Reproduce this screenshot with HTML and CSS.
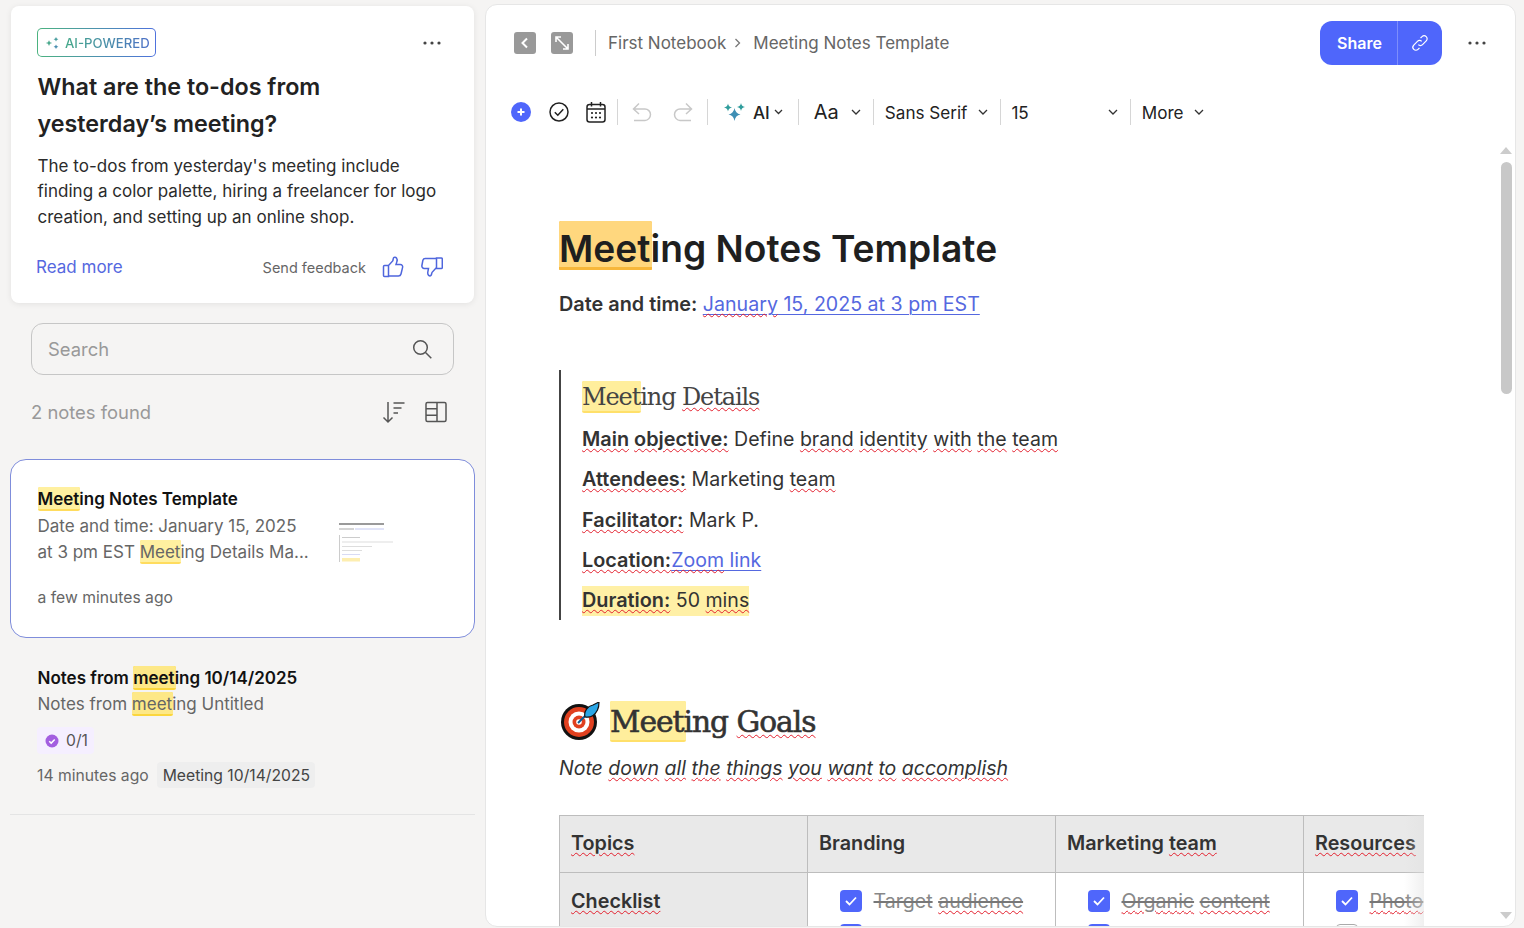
FILE: index.html
```html
<!DOCTYPE html>
<html lang="en">
<head>
<meta charset="utf-8">
<title>Meeting Notes Template</title>
<link rel="stylesheet" href="styles.css">
</head>
<body>
<div class="app">
  <aside class="side">
    <section class="ai-card">
      <div class="ai-top">
        <div class="badge">
          <svg class="badge-icon" width="15" height="14" viewBox="0 0 15 14"><path d="M4 4.200 5 6.200 7.200 7 5 7.800 4 10 3 7.800.8 7 3 6.200Z" fill="#4aa98d"/><path d="M11 1 11.800 2.600 13.400 3.300 11.800 4 11 5.600 10.200 4 8.600 3.300 10.200 2.600Z" fill="#4a9fa0"/><path d="M11 8.400 11.800 10 13.400 10.700 11.800 11.400 11 13 10.200 11.400 8.600 10.700 10.200 10Z" fill="#4a8fb0"/></svg>
          <span class="badge-text">AI-POWERED</span>
        </div>
        <svg class="dots" width="18" height="4" viewBox="0 0 18 4"><circle cx="2" cy="2" r="1.600"/><circle cx="9" cy="2" r="1.600"/><circle cx="16" cy="2" r="1.600"/></svg>
      </div>
      <h2 class="ai-q">What are the to-dos from yesterday’s meeting?</h2>
      <p class="ai-a">The to-dos from yesterday's meeting include finding a color palette, hiring a freelancer for logo creation, and setting up an online shop.</p>
      <div class="ai-foot">
        <a class="read-more">Read more</a>
        <span class="feedback">Send feedback</span>
        <svg class="thumb" width="22" height="22" viewBox="0 0 22 22"><path d="M6.500 9.500v11M1.500 10.500c0-.6.4-1 1-1h4v11h-4c-.6 0-1-.4-1-1ZM6.500 9.500l4.200-4.600c.4-1 .5-2.300 1-3.200.5-.8 2-.7 2.800.3.900 1.100.7 2.700.3 3.900l-.8 2.600h4.300c1.600 0 2.700 1.400 2.300 2.900l-1.600 6.600c-.3 1.200-1.400 2-2.600 2H6.500"/></svg>
        <svg class="thumb" width="22" height="22" viewBox="0 0 22 22"><path d="M15.500 2.500H4.200c-1.100 0-2 .7-2.300 1.700L.9 9.500c-.3 1.500.8 2.900 2.300 2.900h4.300l-.6 3.200c-.3 1.300-.2 2.800.8 3.800.8.800 2 .8 2.500-.2.400-.9.500-2 .9-2.900l4.400-4.800M15.500 2h4.800c.6 0 1 .4 1 1v8.500c0 .6-.4 1-1 1h-4.800Z"/></svg>
      </div>
    </section>

    <div class="search">
      <span class="search-ph">Search</span>
      <svg class="ic-gray" width="22" height="22" viewBox="0 0 22 22"><circle cx="9.500" cy="9.500" r="6.800"/><path d="m14.500 14.500 5.800 5.800"/></svg>
    </div>

    <div class="found">
      <span class="found-text">2 notes found</span>
      <svg class="ic-gray" width="24" height="24" viewBox="0 0 24 24"><path d="M6 2v20M1.500 17.500 6 22l4.500-4.500M11.500 3h11M11.500 8h8M11.500 13h4.500"/></svg>
      <svg class="ic-gray" width="24" height="24" viewBox="0 0 24 24"><rect x="2" y="2.500" width="20" height="19" rx="1.500"/><path d="M13 2.500v19M2 8.800h11M2 15.200h11"/></svg>
    </div>

    <article class="note note-active">
      <div class="note-main">
        <h3 class="note-title"><span class="hl">Meet</span>ing Notes Template</h3>
        <p class="note-prev">Date and time: January 15, 2025<br>at 3 pm EST <span class="hl">Meet</span>ing Details Ma...</p>
      </div>
      <svg class="note-thumb" width="54" height="46" viewBox="0 0 54 46">
        <rect x="0" y="2" width="45" height="2" fill="#9a9a9a"/>
        <rect x="0" y="7.500" width="15" height="1" fill="#aaa"/><rect x="16" y="7.500" width="29" height="1" fill="#c4c9f2"/>
        <rect x="0" y="14" width="1" height="27" fill="#ccc"/>
        <rect x="3" y="16" width="18" height="1" fill="#ccc"/>
        <rect x="3" y="20.500" width="52" height="1" fill="#ddd"/>
        <rect x="3" y="25" width="30" height="1" fill="#ddd"/>
        <rect x="3" y="29" width="20" height="1" fill="#ddd"/>
        <rect x="3" y="33" width="18" height="1" fill="#d8dbf4"/>
        <rect x="3" y="37" width="18" height="3.500" fill="#fdeeb0"/>
      </svg>
      <div class="note-time">a few minutes ago</div>
    </article>

    <article class="note note-plain">
      <h3 class="note-title note-title-2">Notes from <span class="hl hl-strong">meet</span>ing 10/14/2025</h3>
      <p class="note-prev-2">Notes from <span class="hl hl-strong">meet</span>ing Untitled</p>
      <div class="task-chip">
        <svg width="14" height="14" viewBox="0 0 14 14"><circle cx="7" cy="7" r="6.500" fill="#a35ee0"/><path d="m4.200 7.200 2 1.900 3.500-3.600" fill="none" stroke="#fff" stroke-width="1.500"/></svg>
        <span>0/1</span>
      </div>
      <div class="note-meta"><span class="note-time-2">14 minutes ago</span><span class="tag">Meeting 10/14/2025</span></div>
    </article>
  </aside>

  <main class="panel">
    <header class="topbar">
      <span class="sq-btn"><svg width="22" height="22" viewBox="0 0 22 22"><path d="m13 6.500-4.500 4.500 4.500 4.500" fill="none" stroke="#fff" stroke-width="2"/></svg></span>
      <span class="sq-btn"><svg width="22" height="22" viewBox="0 0 22 22"><path d="M5 5l12 12M5 10V5h5M17 12v5h-5" fill="none" stroke="#fff" stroke-width="1.600"/></svg></span>
      <span class="crumb-div"></span>
      <span class="crumb">First Notebook</span>
      <svg class="crumb-chev" width="8" height="12" viewBox="0 0 8 12"><path d="m1.500 2 4 4-4 4" fill="none" stroke="#777" stroke-width="1.300"/></svg>
      <span class="crumb">Meeting Notes Template</span>
      <span class="grow"></span>
      <div class="share">
        <span class="share-label">Share</span>
        <span class="share-link"><svg width="20" height="20" viewBox="0 0 18 18"><path d="M7.500 10.500c1.200 1.300 2.800 1 3.800 0l3.300-3.400c1.100-1.100 1.100-2.700 0-3.800s-2.700-1.100-3.800 0L9.500 4.500M10.500 7.500c-1.200-1.300-2.800-1-3.800 0l-3.300 3.400c-1.100 1.100-1.100 2.700 0 3.800s2.700 1.100 3.800 0l1.300-1.200" fill="none" stroke="#fff" stroke-width="1.100"/></svg></span>
      </div>
      <svg class="dots dots-main" width="18" height="4" viewBox="0 0 18 4"><circle cx="2" cy="2" r="1.600"/><circle cx="9" cy="2" r="1.600"/><circle cx="16" cy="2" r="1.600"/></svg>
    </header>

    <div class="toolbar">
      <span class="t-plus"><svg width="20" height="20" viewBox="0 0 20 20"><circle cx="10" cy="10" r="10" fill="#4f66fb"/><path d="M10 6.500v7M6.500 10h7" stroke="#fff" stroke-width="2"/></svg></span>
      <svg class="t-ic t-check" width="20" height="20" viewBox="0 0 20 20"><circle cx="10" cy="10" r="9"/><path d="m5.800 10.200 3 3 5.500-6"/></svg>
      <svg class="t-ic t-cal" width="20" height="22" viewBox="0 0 20 22"><rect x="1" y="3.500" width="18" height="17.500" rx="2.500"/><path d="M1 8h18M5.500 1v4.500M14.500 1v4.500"/><g class="cal-dots"><circle cx="6" cy="12" r="1.100"/><circle cx="10" cy="12" r="1.100"/><circle cx="14" cy="12" r="1.100"/><circle cx="6" cy="16.500" r="1.100"/><circle cx="10" cy="16.500" r="1.100"/><circle cx="14" cy="16.500" r="1.100"/></g></svg>
      <span class="t-div t-d1"></span>
      <svg class="t-ic-light t-undo" width="20" height="20" viewBox="0 0 20 20"><path d="M7 1.500 1.500 7 7 12M1.500 7H13c3 0 5.500 2.500 5.500 5.500S16 18.500 13 18.500H2"/></svg>
      <svg class="t-ic-light t-redo" width="20" height="20" viewBox="0 0 20 20"><path d="M13 1.500 18.500 7 13 12M18.500 7H7c-3 0-5.500 2.500-5.500 5.500S4 18.500 7 18.500h11"/></svg>
      <span class="t-div t-d2"></span>
      <svg class="t-spark" width="21" height="18" viewBox="0 0 21 18"><path d="M10.500 5Q11.300 10.500 16.500 11.400 11.300 12.300 10.500 18 9.700 12.300 4.500 11.400 9.700 10.500 10.500 5Z" fill="#3f8fb5"/><path d="M4 .5Q4.500 4 8 4.600 4.500 5.200 4 8.500 3.500 5.200 0 4.600 3.500 4 4 .5Z" fill="#2f9d9c"/><path d="M17 0Q17.500 3.500 21 4.100 17.500 4.700 17 8 16.500 4.700 13 4.100 16.500 3.500 17 0Z" fill="#2f9d9c"/></svg>
      <span class="t-label t-ai">AI</span>
      <svg class="chev chev-ai" width="9" height="6" viewBox="0 0 9 6"><path d="m1 1 3.500 3.500L8 1"/></svg>
      <span class="t-div t-d3"></span>
      <span class="t-label t-aa">Aa</span>
      <svg class="chev chev-aa" width="10" height="6" viewBox="0 0 10 6"><path d="m1 1 4 4 4-4"/></svg>
      <span class="t-div t-d4"></span>
      <span class="t-label t-font">Sans Serif</span>
      <svg class="chev chev-font" width="10" height="6" viewBox="0 0 10 6"><path d="m1 1 4 4 4-4"/></svg>
      <span class="t-div t-d5"></span>
      <span class="t-label t-size">15</span>
      <svg class="chev chev-size" width="10" height="6" viewBox="0 0 10 6"><path d="m1 1 4 4 4-4"/></svg>
      <span class="t-div t-d6"></span>
      <span class="t-label t-more">More</span>
      <svg class="chev chev-more" width="10" height="6" viewBox="0 0 10 6"><path d="m1 1 4 4 4-4"/></svg>
    </div>

    <div class="editor-wrap">
      <article class="doc">
        <h1 class="doc-title"><span class="hl hl-orange">Meet</span>ing Notes Template</h1>
        <p class="doc-date"><b>Date and time:</b> <a class="link"><span class="sp">January</span> 15, 2025 at 3 pm EST</a></p>

        <blockquote class="details">
          <h2 class="slab slab-sm"><span class="hl hl-pale">Meet</span>ing <span class="sp">Details</span></h2>
          <p class="row row-first"><b><span class="sp">Main</span> <span class="sp">objective:</span></b> Define <span class="sp">brand</span> <span class="sp">identity</span> <span class="sp">with</span> <span class="sp">the</span> <span class="sp">team</span></p>
          <p class="row"><b><span class="sp">Attendees:</span></b> Marketing <span class="sp">team</span></p>
          <p class="row"><b><span class="sp">Facilitator:</span></b> Mark P.</p>
          <p class="row"><b><span class="sp">Location:</span></b><a class="link"><span class="sp">Zoom</span> link</a></p>
          <p class="row"><span class="hl-line"><b><span class="sp">Duration:</span></b> 50 <span class="sp">mins</span></span></p>
        </blockquote>

        <h2 class="goals">
          <svg class="target" width="40" height="38" viewBox="0 0 40 38"><circle cx="19" cy="20" r="18" fill="#111"/><circle cx="19" cy="20" r="15" fill="#e0401f"/><circle cx="19" cy="20" r="10.500" fill="#fff"/><circle cx="19" cy="20" r="6.500" fill="#e0401f"/><circle cx="19" cy="20" r="2.800" fill="#fff"/><path d="M18 21 28 11" stroke="#0c5c96" stroke-width="2"/><path d="M25 15c-1.500-6 3-11 8-12l6-3c0 4-.5 6-1.500 8-2.500 5-7 8-12.500 7Z" fill="#2aa6e6" stroke="#111" stroke-width="1.200"/></svg>
          <span class="slab"><span class="hl hl-pale hl-tall">Meet</span>ing <span class="sp">Goals</span></span>
        </h2>
        <p class="doc-note"><em>Note <span class="sp">down</span> <span class="sp">all</span> <span class="sp">the</span> <span class="sp">things</span> <span class="sp">you</span> <span class="sp">want</span> <span class="sp">to</span> <span class="sp">accomplish</span></em></p>

        <div class="table-clip">
          <table class="goal-table">
            <tr>
              <th><span class="sp">Topics</span></th>
              <th>Branding</th>
              <th>Marketing <span class="sp">team</span></th>
              <th><span class="sp">Resources</span></th>
            </tr>
            <tr>
              <th class="row-head"><span class="sp">Checklist</span></th>
              <td><div class="todo"><span class="cb"><svg width="14" height="12" viewBox="0 0 14 12"><path d="m2 6 3.500 3.500L12 2.500" fill="none" stroke="#fff" stroke-width="1.800"/></svg></span><span><s>Target</s> <span class="sp"><s>audience</s></span></span></div><div class="todo"><span class="cb"></span></div></td>
              <td><div class="todo"><span class="cb"><svg width="14" height="12" viewBox="0 0 14 12"><path d="m2 6 3.500 3.500L12 2.500" fill="none" stroke="#fff" stroke-width="1.800"/></svg></span><span><span class="sp"><s>Organic</s></span> <span class="sp"><s>content</s></span></span></div><div class="todo"><span class="cb"></span></div></td>
              <td><div class="todo"><span class="cb"><svg width="14" height="12" viewBox="0 0 14 12"><path d="m2 6 3.500 3.500L12 2.500" fill="none" stroke="#fff" stroke-width="1.800"/></svg></span><span><span class="sp"><s>Photo</s></span></span></div><div class="todo"><span class="cb cb-empty"></span></div></td>
            </tr>
          </table>
          <div class="table-fade"></div>
        </div>
      </article>
      <div class="scrollbar">
        <span class="sb-up"></span>
        <span class="sb-thumb"></span>
        <span class="grow"></span>
        <span class="sb-down"></span>
      </div>
    </div>
  </main>
</div>
</body>
</html>
```
FILE: styles.css
```css
* { box-sizing: border-box; }
html, body { margin: 0; height: 100%; overflow: hidden; }
body { background: #f5f4f3; font-family: Inter, "Liberation Sans", sans-serif; color: #222; }
h1, h2, h3, p, blockquote { margin: 0; font-weight: inherit; font-size: inherit; }
.app { display: flex; height: 928px; overflow: hidden; }
.grow { flex: 1; }

/* Sidebar */
.side { width: 485px; flex: none; padding: 6px 10px 0; }
.ai-card { margin-left: 1px; width: 463px; height: 297px; background: #fff; border-radius: 8px; box-shadow: 0 1px 6px rgba(0,0,0,.08); padding: 22px 26px 0; }
.ai-top { display: flex; align-items: center; justify-content: space-between; padding-right: 7px; }
.badge { width: 119px; height: 29px; display: flex; align-items: center; gap: 5px; padding-left: 7px; border-radius: 5px; border: 1.500px solid transparent; background: linear-gradient(#fff,#fff) padding-box, linear-gradient(90deg,#4bb37f,#4f72dd) border-box; }
.badge-text { font-size: 13.200px; font-weight: 500; white-space: nowrap; background: linear-gradient(90deg,#45a98a,#4f72c8); -webkit-background-clip: text; background-clip: text; color: transparent; }
.dots { fill: #444; }
.ai-q { margin: 11px 0 0 .5px; font-size: 23.300px; font-weight: 600; line-height: 37px; color: #222; }
.ai-a { margin: 11.700px 0 0 .5px; font-size: 17px; letter-spacing: .02px; line-height: 25.500px; color: #2b2b2b; }
.ai-foot { margin-top: 26px; margin-left: -1px; display: flex; align-items: center; }
.read-more { font-size: 17px; color: #5568e0; }
.feedback { margin-left: auto; font-size: 14.500px; color: #666; margin-right: 16px; }
.thumb { fill: none; stroke: #4f66dd; stroke-width: 1.500; }
.thumb + .thumb { margin-left: 17px; margin-right: 5px; }

.search { margin: 20px 10px 0 21px; width: 423px; height: 52px; border: 1px solid #c6c6c6; border-radius: 12px; display: flex; align-items: center; justify-content: space-between; padding: 0 20px 0 16px; }
.search-ph { font-size: 18.400px; color: #999; }
.ic-gray { fill: none; stroke: #555; stroke-width: 1.500; }
.found { margin: 25px 0 0 21px; width: 417px; display: flex; align-items: center; gap: 18px; height: 24px; }
.found-text { flex: 1; font-size: 18.400px; color: #999; }

.note { display: grid; }
.note-active { margin-top: 35px; width: 465px; height: 179px; background: #fff; border: 1px solid #7f8ddb; border-radius: 16px; padding: 27px 26px 0 26.500px; grid-template-columns: 302px 54px; grid-template-rows: auto 1fr; }
.note-title { font-size: 17px; font-weight: 600; line-height: 24px; color: #111; }
.note-title-2 { margin-top: 1px; }
.note-main { grid-column: 1; }
.note-prev { margin-top: 2px; font-size: 17px; line-height: 26px; color: #666; white-space: nowrap; }
.note-thumb { grid-column: 2; margin-top: 34px; margin-left: -1px; }
.note-time { grid-column: 1 / 3; margin-top: 21px; font-size: 15.700px; color: #666; }
.note-plain { padding: 27px 0 26px 27.500px; width: 465px; border-bottom: 1px solid #e4e4e4; }
.note-prev-2 { margin-top: 1px; font-size: 17px; line-height: 26px; color: #666; }
.task-chip { margin-top: 10px; margin-left: -.5px; width: 57px; height: 27px; display: flex; align-items: center; gap: 7px; padding-left: 8px; background: #f5efff; border-radius: 4px; font-size: 15.700px; color: #555; }
.note-meta { margin-top: 8px; margin-left: -.5px; display: flex; align-items: center; gap: 8px; }
.note-time-2 { font-size: 15.700px; color: #666; }
.tag { height: 26px; padding: 0 5px 0 6px; display: flex; align-items: center; background: #eeeeee; border-radius: 4px; font-size: 15.700px; color: #444; }

/* Highlights */
.hl { padding: 2px 1px 2px 0; margin-right: -1px; background-image: linear-gradient(#fff0a0,#fff0a0), linear-gradient(#ffdc5e,#ffdc5e); background-size: 100% calc(100% - 2px), 100% 100%; background-position: 0 0, 0 0; background-repeat: no-repeat; border-radius: 2px; }
.hl-strong { background-image: linear-gradient(#fde887,#fde887), linear-gradient(#fbd63d,#fbd63d); }
.hl-orange { padding: 5px 2px 0 0; margin-right: -2px; background-image: linear-gradient(#ffd77e,#ffd77e), linear-gradient(#f7b73a,#f7b73a); background-size: 100% calc(100% - 4px), 100% calc(100% - 1px); }
.hl-pale { background-image: linear-gradient(#ffee9c,#ffee9c), linear-gradient(#ffe06a,#ffe06a); }
.hl-tall { padding: 3px 3px 3px 0; margin-right: -3px; }
.hl-line { background: #fff0a6; padding: 2px 0 4px; }

/* Main panel */
.panel { width: 1031px; height: 923px; margin-top: 4px; background: #fff; border: 1px solid #e6e6e6; border-radius: 12px; overflow: hidden; display: flex; flex-direction: column; flex: none; }
.topbar { display: flex; align-items: center; height: 76px; flex: none; padding: 0 29px 1px 28px; }
.sq-btn { width: 22px; height: 22px; background: #999; border-radius: 3px; display: flex; margin-right: 15px; }
.crumb-div { width: 1px; height: 26px; background: #ccc; margin: 0 12px 0 7px; }
.crumb { font-size: 17px; color: #666; }
.crumb-chev { margin: 0 11px 0 8px; }
.share { width: 122px; height: 44px; border-radius: 12px; background: #4f66fb; display: flex; color: #fff; margin-top: 1px; }
.share-label { width: 78px; display: flex; align-items: center; justify-content: center; font-size: 16px; font-weight: 600; border-right: 1px solid #7d8efc; padding-left: 2px; }
.share-link { flex: 1; display: flex; align-items: center; justify-content: center; }
.dots-main { margin-left: 26px; }

.toolbar { display: flex; align-items: center; height: 50px; flex: none; margin-top: 6px; padding-left: 25px; }
.toolbar > * { flex: none; }
.t-plus { display: flex; }
.t-ic { fill: none; stroke: #222; stroke-width: 1.500; }
.cal-dots { fill: #222; stroke: none; }
.t-ic-light { fill: none; stroke: #c8c8c8; stroke-width: 1.500; }
.t-check { margin-left: 18px; }
.t-cal { margin-left: 17px; }
.t-div { width: 1px; height: 26px; background: #d6d6d6; }
.t-d1 { margin-left: 11px; }
.t-undo { margin-left: 14px; }
.t-redo { margin-left: 21px; }
.t-d2 { margin-left: 14px; }
.t-spark { margin-left: 16px; }
.t-label { font-size: 17.100px; color: #222; }
.t-ai { margin-left: 8px; font-weight: 500; }
.chev { fill: none; stroke: #333; stroke-width: 1.300; }
.chev-ai { margin-left: 4px; }
.t-d3 { margin-left: 15px; }
.t-aa { margin-left: 15px; font-size: 20px; }
.chev-aa { margin-left: 12px; }
.t-d4 { margin-left: 12px; }
.t-font { margin-left: 11px; }
.chev-font { margin-left: 11px; }
.t-d5 { margin-left: 12px; }
.t-size { margin-left: 10px; }
.chev-size { margin-left: 79px; }
.t-d6 { margin-left: 12px; }
.t-more { margin-left: 11px; }
.chev-more { margin-left: 10px; }

.editor-wrap { flex: 1; min-height: 0; display: flex; overflow: hidden; }
.doc { flex: 1; min-width: 0; padding: 89px 0 0 73px; overflow: hidden; }
.doc-title { font-size: 37.200px; font-weight: 600; line-height: 46px; color: #1f1f1f; white-space: nowrap; }
.doc-date { margin-top: 18px; font-size: 19.600px; line-height: 28px; color: #333; }
.doc-date b, .row b { font-weight: 600; font-size: 19.850px; }
.link { color: #5568e0; text-decoration: underline; text-underline-offset: 3px; text-decoration-thickness: 1px; }
.sp { text-decoration: underline wavy #e3202e 1px; text-underline-offset: 2px; }
.details { margin: 52px 0 0; width: 700px; border-left: 2px solid #444; padding: 9px 0 0 21px; height: 250px; }
.slab { font-family: "DejaVu Serif", serif; font-size: 24px; font-weight: 400; letter-spacing: -1.100px; color: #444; }
.slab-sm { line-height: 36px; display: block; }
.row { margin-top: 4.300px; font-size: 19.550px; line-height: 36px; color: #333; white-space: nowrap; }
.row-first { margin-top: 6px; }
.goals { margin-top: 81px; display: flex; align-items: center; gap: 10px; height: 40px; }
.goals .slab { font-size: 29.700px; letter-spacing: -1px; -webkit-text-stroke: .6px #333; color: #333; }
.target { margin-left: 1px; flex: none; }
.doc-note { margin-top: 13px; font-size: 19.500px; line-height: 28px; color: #333; }
.table-clip { margin-top: 33px; width: 865px; overflow: hidden; position: relative; }
.goal-table { border-collapse: collapse; table-layout: fixed; width: 993px; font-size: 19.600px; }
.goal-table th, .goal-table td { border: 1px solid #bdbdbd; padding: 0 11px; vertical-align: top; text-align: left; }
.goal-table th { background: #e9e9e9; font-weight: 600; font-size: 19.800px; color: #333; height: 57px; vertical-align: middle; white-space: nowrap; padding-bottom: 2px; }
.goal-table .row-head { vertical-align: top; padding-top: 16px; padding-bottom: 0; }
.goal-table td { padding: 16px 0 0 31.500px; background: #fff; }
.todo { display: flex; align-items: center; gap: 12px; height: 24px; margin-bottom: 10px; color: #888; white-space: nowrap; }
.cb { width: 22px; height: 22px; flex: none; border-radius: 4px; background: #4f66fb; display: flex; align-items: center; justify-content: center; }
.cb-empty { background: #fff; border: 1px solid #aaa; }
s { text-decoration: line-through #777 2px; }
.table-fade { position: absolute; top: 0; bottom: 0; right: 0; width: 20px; background: linear-gradient(90deg, rgba(255,255,255,0), rgba(225,225,225,.5)); }
.scrollbar { width: 29px; flex: none; padding: 10px 0 7px 15px; display: flex; flex-direction: column; align-items: flex-start; }
.sb-up { width: 0; height: 0; border: 6.500px solid transparent; border-top: 0; border-bottom: 7px solid #ccc; margin-left: -1px; }
.sb-thumb { width: 11px; height: 232px; margin-top: 8px; background: #c8c8c8; border-radius: 6px; }
.sb-down { width: 0; height: 0; border: 6.500px solid transparent; border-bottom: 0; border-top: 7px solid #ccc; margin-left: -1px; }
```
